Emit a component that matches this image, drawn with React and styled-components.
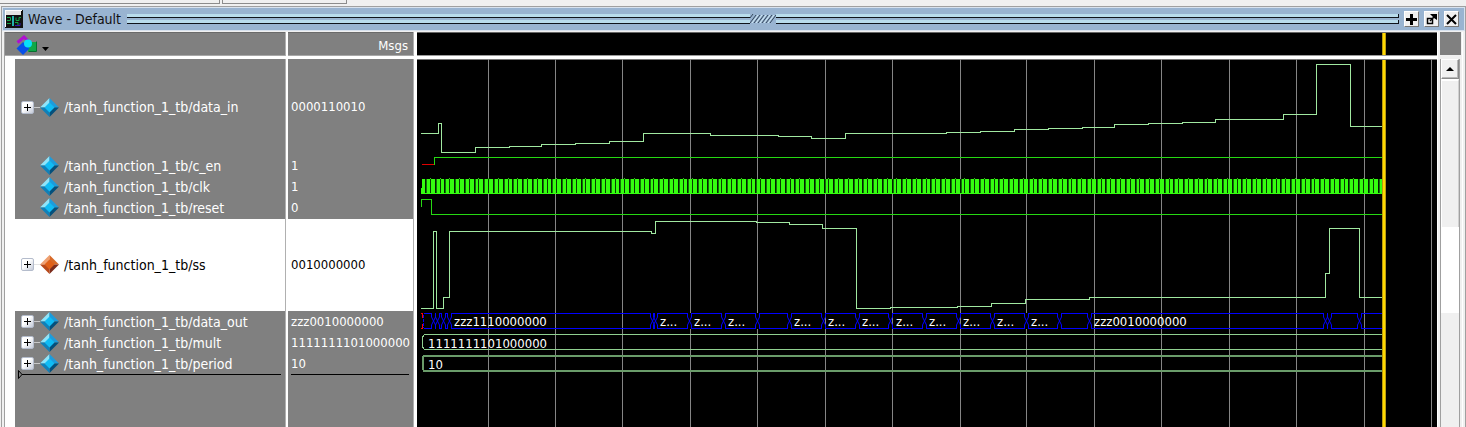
import React from "react";
import styled, { createGlobalStyle } from "styled-components";

const GlobalStyle = createGlobalStyle`
  * { box-sizing: border-box; }
  body {
    margin: 0;
    background: #f0f0f0;
    font: 13px/16px "DejaVu Sans Condensed", "Noto Sans", sans-serif;
    color: #000;
  }
  button { padding: 0; margin: 0; border: 0; font: inherit; color: inherit; }
  svg { display: block; }
`;

const Page = styled.main`
  min-height: 100vh;
  display: flex;
  flex-direction: column;
  overflow: hidden;
`;

const DockEdge = styled.div`
  display: flex;
  gap: 2px;
  height: 6px;
  flex: none;
`;

const DockTab = styled.div`
  width: ${(p) => p.$width}px;
  height: 4px;
  border: solid #8c8c8c;
  border-width: 0 1px 1px ${(p) => (p.$first ? 0 : 1)}px;
`;

const Window = styled.section`
  flex: 1;
  display: flex;
  flex-direction: column;
  margin-left: 1px;
  border: solid #a0a0a0;
  border-width: 1px 1px 0 1px;
  background: #f0f0f0;
`;

const TitleBar = styled.header`
  display: flex;
  align-items: center;
  height: 24px;
  padding: 0 5px 0 2px;
  border: 1px solid #d8e2ee;
  background: #99b4d1;
`;

const Title = styled.h1`
  margin: 0 6px 0 5px;
  font-size: 14px;
  font-weight: 400;
  white-space: nowrap;
  color: #111;
`;

const Grip = styled.div`
  flex: 1;
  display: flex;
  flex-direction: column;
  gap: 2px;
  margin-right: 5px;
  position: relative;
`;

const Groove = styled.div`
  height: 4px;
  background: #b9dcec;
  border: solid #10141c;
  border-width: 0 1px 1px 0;
`;

const GripTexture = styled.svg`
  position: absolute;
  left: 49%;
  top: 0;
`;

const TitleButtons = styled.div`
  display: flex;
  gap: 5px;
`;

const TitleButton = styled.button`
  width: 15px;
  height: 16px;
  display: grid;
  place-items: center;
  background: #f0f0f0;
  border: 1px solid;
  border-color: #fff #777 #777 #fff;
`;

const Content = styled.div`
  flex: 1;
  display: flex;
  margin: 1px 2px 0 2px;
  border-left: 1px solid #a0a0a0;
`;

const SignalPane = styled.div`
  width: 412px;
  flex: none;
  display: flex;
  flex-direction: column;
`;

const SignalTable = styled.table`
  width: 412px;
  table-layout: fixed;
  border-collapse: separate;
  border-spacing: 0;
`;

const NAME_WIDTH = 283;

const HeadCell = styled.th`
  width: ${(p) => (p.$name ? NAME_WIDTH + "px" : "auto")};
  height: 27px;
  padding: ${(p) => (p.$name ? "2px 0 0 11px" : "3px 6px 0 0")};
  font-weight: 400;
  text-align: right;
  color: #fff;
  background: #808080;
  border: solid #fff;
  border-width: 0 ${(p) => (p.$name ? 2 : 3)}px 3px 0;
  box-shadow: inset -1px 0 #b0b0b0, inset 0 1px #6a6a6a, inset 0 -1px #a8a8a8;
`;

const Cell = styled.td`
  height: ${(p) => p.$height}px;
  padding: ${(p) => (p.$name ? "0 0 0 6px" : "0 0 0 3px")};
  white-space: nowrap;
  color: ${(p) => (p.$selected ? "#000" : "#fff")};
  background: ${(p) => (p.$selected ? "#fff" : "#808080")};
  border: 0 solid #fff;
  border-left-width: ${(p) => (p.$name ? 10 : 0)}px;
  border-right-width: ${(p) => (p.$name ? 2 : 3)}px;
  box-shadow: inset -1px 0 #b0b0b0${(p) => (p.$selected ? ", inset 0 1px #808080" : "")};
`;

const SignalName = styled.div`
  display: flex;
  align-items: center;
`;

const Expander = styled.button`
  width: 13px;
  height: 13px;
  display: grid;
  place-items: center;
  background: linear-gradient(135deg, #fff 40%, #c4cad8);
  border: 1px solid #b4bccc;
  border-radius: 2px;
`;

const Stem = styled.span`
  width: ${(p) => (p.$leaf ? 19 : 6)}px;
  height: 1px;
  background: ${(p) => (p.$leaf ? "transparent" : p.$selected ? "#e4e4e4" : "#c8c8c8")};
`;

const Label = styled.span`
  margin-left: 5px;
  font-size: 14px;
`;

const PaneRest = styled.div`
  flex: 1;
  display: flex;
`;

const RestCell = styled.div`
  width: ${(p) => (p.$name ? NAME_WIDTH + "px" : "129px")};
  padding: 0 5px 0 3px;
  background: #808080;
  border: 0 solid #fff;
  border-left-width: ${(p) => (p.$name ? 10 : 0)}px;
  border-right-width: ${(p) => (p.$name ? 2 : 3)}px;
  box-shadow: inset -1px 0 #b0b0b0;
`;

const InsertLine = styled.div`
  height: 1px;
  background: #000;
`;

const InsertMark = styled.svg`
  margin-top: -5px;
`;

const WavePane = styled.div`
  flex: 1;
  min-width: 0;
  display: flex;
  flex-direction: column;
  background: #000;
`;

const WaveHead = styled.svg`
  width: 100%;
  height: 23px;
  flex: none;
`;

const Divider = styled.div`
  height: 4px;
  flex: none;
  background: #fff;
  border: solid #9a9a9a;
  border-width: 1px 0 0 0;
`;

const WaveCanvas = styled.svg`
  width: 100%;
  min-height: 340px;
  flex: 1;
  font-size: 13px;
`;

const ScrollPane = styled.div`
  width: 26px;
  flex: none;
  display: flex;
  flex-direction: column;
  background: #f0f0f0;
  border: solid;
  border-width: 0 1px;
  border-color: #d0d0d0 #fff;
`;

const ScrollCorner = styled.div`
  height: 23px;
  margin: 0 1px 4px 2px;
  background: #808080;
`;

const ScrollTrack = styled.div`
  flex: 1;
  display: flex;
  flex-direction: column;
  margin: 0 2px;
  border: solid #a0a0a0;
  border-width: 0 1px;
`;

const ScrollButton = styled.button`
  height: 20px;
  display: grid;
  place-items: center;
  background: #f0f0f0;
  border: 1px solid;
  border-color: #fff #8a8a8a #8a8a8a #fff;
  box-shadow: inset -1px -1px #b8b8b8;
`;

const ScrollThumb = styled.div`
  height: 148px;
  border: solid;
  border-width: 2px 1px 0 1px;
  border-color: #fff #d0d0d0 #fff #fff;
`;

const ScrollGap = styled.div`
  height: 86px;
  background: #fff;
`;

const SIGNALS = [
  { name: "/tanh_function_1_tb/data_in", value: "0000110010", height: 96, bus: true },
  { name: "/tanh_function_1_tb/c_en", value: "1", height: 21 },
  { name: "/tanh_function_1_tb/clk", value: "1", height: 21 },
  { name: "/tanh_function_1_tb/reset", value: "0", height: 21 },
  { name: "/tanh_function_1_tb/ss", value: "0010000000", height: 93, bus: true, selected: true },
  { name: "/tanh_function_1_tb/data_out", value: "zzz0010000000", height: 21, bus: true },
  { name: "/tanh_function_1_tb/mult", value: "1111111101000000", height: 21, bus: true },
  { name: "/tanh_function_1_tb/period", value: "10", height: 21, bus: true },
];

const END = 966;

// Each step is [start x, level y]; the level holds until the next step.
const DATA_IN = [
  [4, 74], [21, 64], [24, 93], [58, 88], [92, 87], [124, 85], [158, 84], [192, 82],
  [226, 74], [293, 76], [361, 77], [394, 79], [428, 74], [529, 73], [563, 72],
  [597, 70], [631, 69], [665, 68], [697, 65], [731, 64], [765, 63], [798, 60],
  [866, 55], [899, 5], [933, 67],
];

const SS = [
  [4, 249], [16, 172], [19, 249], [26, 238], [32, 172], [234, 174], [238, 162],
  [339, 163], [372, 165], [405, 169], [439, 249], [473, 248], [540, 247], [574, 244],
  [608, 240], [672, 238], [908, 214], [912, 169], [942, 238],
];

const GRID_LINES = [71, 138, 205, 273, 340, 408, 475, 543, 609, 677, 744, 812, 879, 947, 1014];

const BUS_EDGES = [
  16, 20, 26, 32, 235, 238, 272, 306, 340, 372, 406, 440, 473, 507, 541, 575, 609,
  642, 672, 908, 912, 942,
];

const BUS_LABELS = [
  [37, "zzz1110000000"], [243, "z..."], [277, "z..."], [311, "z..."], [377, "z..."],
  [411, "z..."], [445, "z..."], [479, "z..."], [512, "z..."], [546, "z..."],
  [580, "z..."], [614, "z..."], [677, "zzz0010000000"],
];

const stepPath = (steps) =>
  steps.map(([x, y], i) => (i ? `H${x + 0.5}V${y + 0.5}` : `M${x} ${y + 0.5}`)).join("") + `H${END}`;

const busEdgePath = (x) => {
  const c = x + 0.5;
  return `M${c - 2} 254V258L${c - 1} 260L${c + 1} 264L${c + 2} 266V270M${c + 2} 254V258L${c + 1} 260L${c - 1} 264L${c - 2} 266V270`;
};

const clockGaps = Array.from({ length: 197 }, (_, i) => Math.round(8 + i * 4.86));

function Diamond({ warm }) {
  const c = warm
    ? ["#f0a070", "#d86a28", "#7c2c1c", "#b84818", "#e06018"]
    : ["#8fe4fa", "#1c9cdc", "#04507c", "#1080b8", "#10bcf4"];
  return (
    <svg width="19" height="19" viewBox="0 0 19 19" aria-hidden="true">
      <path d="M9.500 0L0 9.500H9.500Z" fill={c[0]} />
      <path d="M9.500 0L19 9.500H9.500Z" fill={c[1]} />
      <path d="M9.500 19L19 9.500H9.500Z" fill={c[2]} />
      <path d="M9.500 19L0 9.500H9.500Z" fill={c[3]} />
      <path d="M9.500 4.500L14.500 9.500L9.500 14.500L4.500 9.500Z" fill={c[4]} />
    </svg>
  );
}

function WaveLogo() {
  return (
    <svg width="18" height="18" viewBox="0 0 18 18" aria-hidden="true">
      <rect width="18" height="18" fill="#111" />
      <path d="M0 0H17V1H1V17H0Z" fill="#fff" />
      <rect x="1" y="1" width="15" height="4" fill="#e4e4e4" />
      <path d="M2 7.500H5.500V10.500H2M2 13.500H6M11 7.500V10.500H14V7.500H16M10 12.500H13V15" fill="none" stroke="#10a848" />
      <path d="M8 6V16" stroke="#28e8e0" strokeWidth="1.500" />
      <path d="M10 15.500H15V13" fill="none" stroke="#3418b0" />
    </svg>
  );
}

function SortIcon() {
  return (
    <svg width="34" height="21" viewBox="0 0 34 21" aria-hidden="true">
      <path d="M1.500 7.500L8 2L12 6" fill="none" stroke="#b010d0" strokeWidth="3" />
      <rect x="12" y="7" width="8" height="10" fill="#10a848" />
      <path d="M20.500 6.500V16.500H13" fill="none" stroke="#087030" />
      <path d="M7 7L13.500 13.500L7 20L0.500 13.500Z" fill="#0850e8" />
      <circle cx="12" cy="8.500" r="4" fill="#08e0f8" />
      <path d="M26 12H33L29.500 16Z" fill="#000" />
    </svg>
  );
}

function Waves() {
  return (
    <WaveCanvas role="img" aria-label="Signal waveforms">
      <rect width="100%" height="1" fill="#777" />
      {GRID_LINES.map((x) => (
        <rect key={x} x={x} y="0" width="1" height="100%" fill="#858585" />
      ))}
      <g fill="none" stroke="#a0e8a0" shapeRendering="crispEdges">
        <path d={stepPath(DATA_IN)} />
        <path d={stepPath(SS)} />
      </g>
      <g fill="none" stroke="#26d812" shapeRendering="crispEdges">
        <path d="M5 105.500H17" stroke="#e00000" />
        <path d={`M17.500 106V98.500H${END}`} />
        <path d={`M4.500 148V140.500H14.500V155.500H${END}`} />
      </g>
      <rect x="4" y="129" width="1" height="6" fill="#35ff10" />
      <rect x="5" y="120" width={END - 5} height="15" fill="#35ff10" />
      {clockGaps.map((x, i) =>
        i % 2 ? (
          <g key={x}>
            <rect x={x} y="119" width="1" height="1" fill="#2ad010" />
            <rect x={x} y="120" width="1" height="14" fill="#083c02" />
          </g>
        ) : (
          <g key={x}>
            <rect x={x} y="120" width="1" height="14" fill="#042002" />
            <rect x={x + 1} y="120" width="1" height="14" fill="#107408" />
          </g>
        )
      )}
      <g fill="none" stroke="#0000ff">
        <g shapeRendering="crispEdges">
          <path d={`M7 254.500H${END}`} />
          <path d={`M7 269.500H${END}`} />
        </g>
        {BUS_EDGES.map((x) => (
          <rect key={x} x={x - 1} y="254" width="3" height="16" fill="#000" stroke="none" />
        ))}
        {BUS_EDGES.map((x) => (
          <path key={x} d={busEdgePath(x)} />
        ))}
        <path d="M6.500 256V269" strokeDasharray="3 1" />
        <path d="M4 254.500H6M5.500 255V259M5.500 265V269M4 269.500H6" stroke="#ff0000" />
      </g>
      <g fill="none" shapeRendering="crispEdges">
        <path d={`M${END} 275.500H7.500L5.500 278V288L7.500 290.500H${END}`} stroke="#90d090" />
        <path d={`M${END} 297H7L5.500 299V309L7 312H${END}`} stroke="#6a9c6a" strokeWidth="2" />
      </g>
      <g fill="#fff">
        {BUS_LABELS.map(([x, text]) => (
          <text key={x} x={x} y="267">{text}</text>
        ))}
        <text x="11" y="289">1111111101000000</text>
        <text x="11" y="310">10</text>
      </g>
      <rect x="965" y="1" width="4" height="100%" fill="#b89a10" />
      <rect x="966" y="1" width="2" height="100%" fill="#ffd800" />
    </WaveCanvas>
  );
}

export default function App() {
  return (
    <>
      <GlobalStyle />
      <Page>
        <DockEdge>
          <DockTab $width={220} $first />
          <DockTab $width={125} />
        </DockEdge>
        <Window>
          <TitleBar>
            <WaveLogo />
            <Title>Wave - Default</Title>
            <Grip>
              <Groove />
              <Groove />
              <GripTexture width="26" height="10" aria-hidden="true">
                <rect width="26" height="10" fill="#99b4d1" />
                <path d="M0 4L3 0M0 9L6 1M4 9L10 1M8 9L14 1M12 9L18 1M16 9L22 1M20 9L26 1" stroke="#34465c" />
                <path d="M2 9L8 1M6 9L12 1M10 9L16 1M14 9L20 1M18 9L24 1" stroke="#d4ecf8" />
              </GripTexture>
            </Grip>
            <TitleButtons>
              <TitleButton aria-label="Maximize">
                <svg width="11" height="11"><path d="M5.500 0V11M0 5.500H11" stroke="#000" strokeWidth="3" /></svg>
              </TitleButton>
              <TitleButton aria-label="Undock">
                <svg width="11" height="12">
                  <path d="M1.500 5.500H6.500V10.500H1.500Z" fill="none" stroke="#000" strokeWidth="1.500" />
                  <path d="M4 8L9 3" stroke="#000" strokeWidth="1.500" />
                  <path d="M4 1H11V7L8 5Z" fill="#000" />
                </svg>
              </TitleButton>
              <TitleButton aria-label="Close">
                <svg width="11" height="11"><path d="M1 1L10 10M10 1L1 10" stroke="#000" strokeWidth="2" /></svg>
              </TitleButton>
            </TitleButtons>
          </TitleBar>
          <Content>
            <SignalPane>
              <SignalTable>
                <thead>
                  <tr>
                    <HeadCell $name scope="col" aria-label="Signal"><SortIcon /></HeadCell>
                    <HeadCell scope="col">Msgs</HeadCell>
                  </tr>
                </thead>
                <tbody>
                  {SIGNALS.map((s) => (
                    <tr key={s.name}>
                      <Cell $name $height={s.height} $selected={s.selected}>
                        <SignalName>
                          {s.bus && (
                            <Expander aria-label={`Expand ${s.name}`}>
                              <svg width="7" height="7"><path d="M3.500 0V7M0 3.500H7" stroke="#000" strokeWidth="1" /></svg>
                            </Expander>
                          )}
                          <Stem $leaf={!s.bus} $selected={s.selected} />
                          <Diamond warm={s.selected} />
                          <Label>{s.name}</Label>
                        </SignalName>
                      </Cell>
                      <Cell $height={s.height} $selected={s.selected}>{s.value}</Cell>
                    </tr>
                  ))}
                </tbody>
              </SignalTable>
              <PaneRest>
                <RestCell $name>
                  <InsertLine />
                  <InsertMark width="5" height="9" aria-hidden="true">
                    <path d="M0.500 0.500L4 4.500L0.500 8.500Z" fill="#808080" stroke="#000" />
                  </InsertMark>
                </RestCell>
                <RestCell>
                  <InsertLine />
                </RestCell>
              </PaneRest>
            </SignalPane>
            <WavePane>
              <WaveHead aria-hidden="true">
                <rect width="100%" height="1" fill="#666" />
                <rect x="965" y="1" width="4" height="22" fill="#b89a10" />
                <rect x="966" y="1" width="2" height="22" fill="#ffd800" />
              </WaveHead>
              <Divider />
              <Waves />
            </WavePane>
            <ScrollPane>
              <ScrollCorner />
              <ScrollTrack>
                <ScrollButton aria-label="Scroll up">
                  <svg width="8" height="4"><path d="M0 4L4 0L8 4Z" fill="#000" /></svg>
                </ScrollButton>
                <ScrollThumb />
                <ScrollGap />
              </ScrollTrack>
            </ScrollPane>
          </Content>
        </Window>
      </Page>
    </>
  );
}
